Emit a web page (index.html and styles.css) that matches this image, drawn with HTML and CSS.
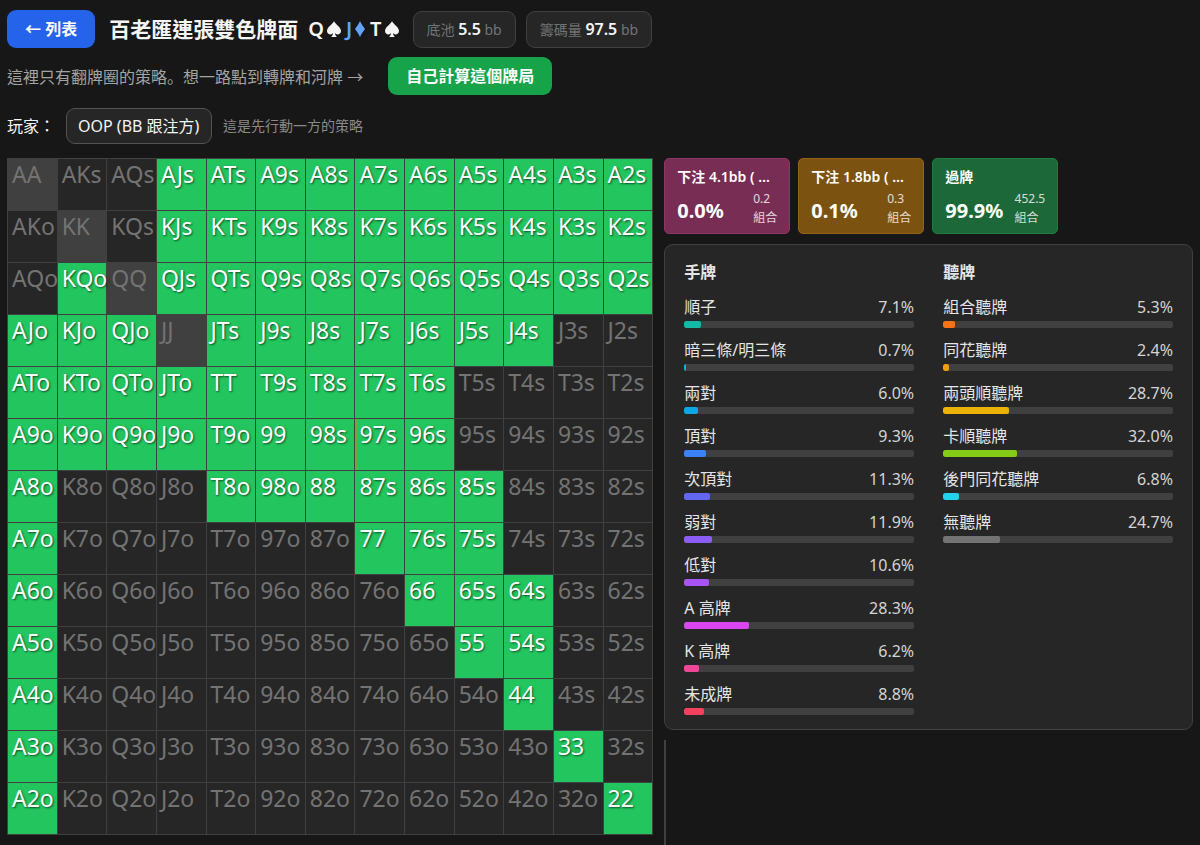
FILE: index.html
```
<!DOCTYPE html>
<html lang="zh-Hant">
<head>
    <meta charset="UTF-8">
    <meta name="viewport" content="width=device-width, initial-scale=1.0">
    <title>百老匯連張雙色牌面</title>
    <link rel="stylesheet" href="styles.css">
</head>
<body>
    <header class="top">
        <div class="title-row">
            <a class="btn btn-blue" href="#list">← 列表</a>
            <h1>百老匯連張雙色牌面</h1>
            <div class="board">
                <span class="card">Q<svg viewBox="0 0 14 16"><path d="M7 0C6 3 0 6 0 10c0 3.500 4.500 4.500 6 2-.1 1.800-.8 3-2 4h6c-1.200-1-1.900-2.200-2-4 1.500 2.500 6 1.500 6-2C14 6 8 3 7 0z"/></svg></span>
                <span class="card card-blue">J<svg class="diamond" viewBox="0 0 10 16"><path d="M5 0C6.500 3 8 5.500 10 8 8 10.500 6.500 13 5 16 3.500 13 2 10.500 0 8 2 5.500 3.500 3 5 0z"/></svg></span>
                <span class="card">T<svg viewBox="0 0 14 16"><path d="M7 0C6 3 0 6 0 10c0 3.500 4.500 4.500 6 2-.1 1.800-.8 3-2 4h6c-1.200-1-1.900-2.200-2-4 1.500 2.500 6 1.500 6-2C14 6 8 3 7 0z"/></svg></span>
            </div>
            <div class="chip">底池 <strong>5.5</strong> bb</div>
            <div class="chip">籌碼量 <strong>97.5</strong> bb</div>
        </div>
        <div class="hint-row">
            <p>這裡只有翻牌圈的策略<span class="punct" lang="ja">。</span>想一路點到轉牌和河牌 →</p>
            <button class="btn btn-green" type="button">自己計算這個牌局</button>
        </div>
        <div class="player-row">
            <label for="player">玩家：</label>
            <select id="player">
                <option>OOP (BB 跟注方)</option>
            </select>
            <span class="note">這是先行動一方的策略</span>
        </div>
    </header>

    <main class="content">
        <table class="matrix"><tbody id="matrix"></tbody></table>

        <div class="side">
            <div class="actions">
                <div class="action action-pink">
                    <div class="action-name">下注 4.1bb ( 75% )</div>
                    <div class="action-info"><strong>0.0%</strong><span>0.2<br>組合</span></div>
                </div>
                <div class="action action-amber">
                    <div class="action-name">下注 1.8bb ( 33% )</div>
                    <div class="action-info"><strong>0.1%</strong><span>0.3<br>組合</span></div>
                </div>
                <div class="action action-green">
                    <div class="action-name">過牌</div>
                    <div class="action-info"><strong>99.9%</strong><span>452.5<br>組合</span></div>
                </div>
            </div>

            <div class="stats">
                <section>
                    <h2>手牌</h2>
                    <div id="hands"></div>
                </section>
                <section>
                    <h2>聽牌</h2>
                    <div id="draws"></div>
                </section>
            </div>

            <div class="detail"></div>
        </div>
    </main>

    <script>
        const ranks = 'AKQJT98765432';

        // x = hand is in range, one string per row
        const range = [
            '...xxxxxxxxxx',
            '...xxxxxxxxxx',
            '.x.xxxxxxxxxx',
            'xxx.xxxxxxx..',
            'xxxxxxxxx....',
            'xxxxxxxxx....',
            'x...xxxxxx...',
            'x......xxx...',
            'x.......xxx..',
            'x........xx..',
            'x.........x..',
            'x..........x.',
            'x...........x'
        ];

        const hands = [
            ['順子', 7.1, '#14b8a6'],
            ['暗三條/明三條', 0.7, '#06b6d4'],
            ['兩對', 6.0, '#0ea5e9'],
            ['頂對', 9.3, '#3b82f6'],
            ['次頂對', 11.3, '#6366f1'],
            ['弱對', 11.9, '#8b5cf6'],
            ['低對', 10.6, '#a855f7'],
            ['A 高牌', 28.3, '#d946ef'],
            ['K 高牌', 6.2, '#ec4899'],
            ['未成牌', 8.8, '#f43f5e']
        ];

        const draws = [
            ['組合聽牌', 5.3, '#f97316'],
            ['同花聽牌', 2.4, '#f59e0b'],
            ['兩頭順聽牌', 28.7, '#eab308'],
            ['卡順聽牌', 32.0, '#84cc16'],
            ['後門同花聽牌', 6.8, '#22d3ee'],
            ['無聽牌', 24.7, '#737373']
        ];

        function handName(row, col) {
            if (row === col) return ranks[row] + ranks[row];
            return row < col ? ranks[row] + ranks[col] + 's' : ranks[col] + ranks[row] + 'o';
        }

        function renderMatrix() {
            document.getElementById('matrix').innerHTML = range.map((line, row) =>
                '<tr>' + [...line].map((mark, col) => {
                    const name = handName(row, col);
                    let cls = mark === 'x' ? 'check' : row === col ? 'pair' : 'out';
                    if (name === '97s') cls += ' mixed';
                    return `<td class="${cls}">${name}</td>`;
                }).join('') + '</tr>'
            ).join('');
        }

        function renderStats(id, rows) {
            document.getElementById(id).innerHTML = rows.map(([name, pct, color]) => `
                <div class="stat">
                    <div class="stat-text"><span>${name}</span><span class="stat-pct">${pct.toFixed(1)}%</span></div>
                    <div class="bar"><div class="bar-fill" style="width: ${pct}%; background: ${color}"></div></div>
                </div>`).join('');
        }

        renderMatrix();
        renderStats('hands', hands);
        renderStats('draws', draws);
    </script>
</body>
</html>
```
FILE: styles.css
```
* { box-sizing: border-box; }
body { display: flex; flex-direction: column; height: 100vh; margin: 0; padding: 10px 7px 0; overflow: hidden; background: #171717; color: #f5f5f5; font-family: "Noto Sans", "Noto Sans CJK TC", sans-serif; font-size: 16px; line-height: 24px; }
h1, h2, p { margin: 0; }

.top { display: flex; flex-direction: column; gap: 9px; margin-bottom: 14px; }
.title-row, .hint-row, .player-row { display: flex; align-items: center; white-space: nowrap; }
.title-row { gap: 10px; }
.title-row h1 { margin-left: 4px; font-size: 21px; font-weight: 600; line-height: 28px; }
.hint-row { gap: 25px; color: #a3a3a3; }
.punct { font-family: "Noto Sans CJK JP", sans-serif; }
.player-row { gap: 11px; padding-top: 4px; }

.btn { display: block; padding: 7px 18px; border: 0; border-radius: 9px; color: #fff; font: inherit; font-weight: 600; text-decoration: none; cursor: pointer; }
.btn-blue { background: #2563eb; }
.btn-green { background: #16a34a; }

.board { display: flex; gap: 5px; margin-right: 4px; font-size: 20px; font-weight: 600; }
.card { display: flex; align-items: center; gap: 3px; }
.card svg { width: 14px; height: 16px; fill: currentColor; }
.card .diamond { width: 10px; }
.card-blue { color: #60a5fa; }

.chip { padding: 5px 13px; border: 1px solid #404040; border-radius: 9px; background: #262626; color: #737373; font-size: 14px; }
.chip strong { color: #f5f5f5; font-size: 16px; font-weight: 600; }

.player-row select { appearance: none; height: 36px; padding: 0 11px; border: 1px solid #525252; border-radius: 9px; background: #262626; color: #f5f5f5; font: inherit; }
.note { color: #8a8a8a; font-size: 14px; }

.content { display: grid; flex: 1; grid-template-columns: 55fr 45fr; gap: 11px; min-height: 0; }

.matrix { width: 100%; align-self: start; border-collapse: collapse; table-layout: fixed; }
.matrix td { height: 52px; padding: 0 0 0 4px; border: 1px solid #404040; font-size: 23px; line-height: 30px; vertical-align: top; white-space: nowrap; }
.matrix .out { background: #262626; color: #737373; }
.matrix .pair { background: #404040; color: #737373; }
.matrix .check { background: #22c55e; color: #fff; text-shadow: 1px 1px 2px rgba(0, 0, 0, 0.6); }
.matrix .mixed { background: linear-gradient(to right, #ca8a04 1px, #22c55e 1px); }

.side { display: flex; flex-direction: column; gap: 10px; min-width: 0; }
.actions { display: flex; gap: 8px; }
.action { width: 126px; padding: 6px 12px; border: 1px solid; border-radius: 5px; color: #fff; }
.action-pink { border-color: #8d3564; background: #782d54; }
.action-amber { border-color: #956412; background: #7c5210; }
.action-green { border-color: #1d7d40; background: #1d6838; }
.action-name { overflow: hidden; font-size: 14px; font-weight: 600; text-overflow: ellipsis; white-space: nowrap; }
.action-info { display: flex; align-items: flex-end; justify-content: space-between; }
.action-info strong { font-size: 20px; line-height: 32px; }
.action-info span { font-size: 12px; line-height: 19px; opacity: 0.8; }

.stats { display: grid; grid-template-columns: 1fr 1fr; gap: 29px; padding: 15px 19px 14px; border: 1px solid #404040; border-radius: 9px; background: #262626; color: #e5e5e5; }
.stats h2 { margin-bottom: 11px; font-size: 16px; font-weight: 600; }
.stat + .stat { margin-top: 10px; }
.stat-text { display: flex; justify-content: space-between; margin-bottom: 2px; }
.stat-pct { color: #d4d4d4; }
.bar { height: 7px; overflow: hidden; border-radius: 2px; background: #404040; }
.bar-fill { height: 100%; border-radius: 2px; }

.detail { flex: 1; border-left: 2px solid #404040; }
```
